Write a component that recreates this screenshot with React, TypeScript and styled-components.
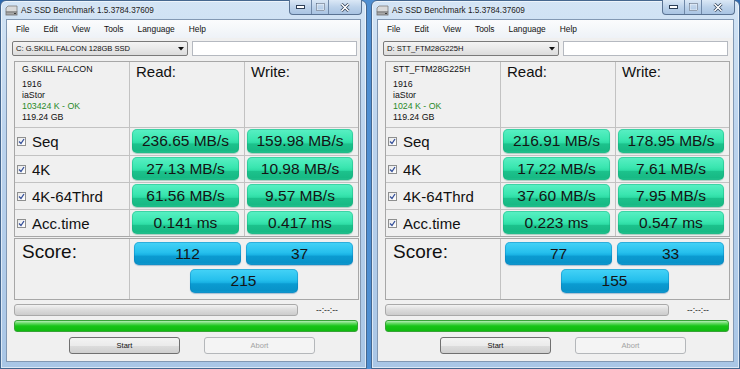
import React from 'react'
import styled, { createGlobalStyle } from 'styled-components'

const GlobalStyle = createGlobalStyle`
  html, body {
    margin: 0;
    padding: 0;
  }
  body {
    width: 740px;
    height: 369px;
    overflow: hidden;
    font-family: "Liberation Sans", Arial, sans-serif;
    color: #111;
  }
`

const Desktop = styled.div`
  display: flex;
  gap: 4px;
  width: 740px;
  height: 369px;
  background: linear-gradient(90deg, #2c68b0 0%, #4f8fd2 50%, #2c68b0 100%);
  overflow: hidden;
`

const Window = styled.div<{ $width: number }>`
  flex: 0 0 ${p => p.$width}px;
  height: 369px;
  box-sizing: border-box;
  display: flex;
  flex-direction: column;
  padding: 0 5px 6px;
  border: 1px solid #45678f;
  border-radius: 6px 6px 0 0;
  background: linear-gradient(180deg, #d3e4f5 0%, #bcd4ee 35%, #a9c6e6 100%);
  box-shadow: inset 0 0 0 1px rgba(255, 255, 255, 0.6);
`

const TitleBar = styled.div`
  height: 18px;
  margin: 0 -5px;
  padding-left: 4px;
  display: flex;
  align-items: center;
  gap: 3px;
`

const Title = styled.span`
  font-size: 8.2px;
  color: #1b1b1b;
  text-shadow: 0 0 6px rgba(255, 255, 255, 0.9);
  white-space: nowrap;
`

const Captions = styled.div`
  margin: -1px 4px 0 auto;
  align-self: flex-start;
  height: 14px;
  display: flex;
  border: 1px solid #5a7393;
  border-top: none;
  border-radius: 0 0 4px 4px;
  overflow: hidden;
  background: linear-gradient(180deg, #dbe8f6 0%, #bcd2ea 50%, #a9c4e3 100%);
`

const CaptionButton = styled.div<{ $width: number }>`
  width: ${p => p.$width}px;
  display: flex;
  align-items: center;
  justify-content: center;
  & + & {
    border-left: 1px solid #6f88a8;
  }
`

const Client = styled.div`
  flex: 1;
  display: flex;
  flex-direction: column;
  background: #f0f0f0;
  border: 1px solid #8298b3;
`

const MenuBar = styled.div`
  height: 18px;
  display: flex;
  align-items: center;
  padding-left: 2px;
  background: linear-gradient(180deg, #fbfcfd 0%, #eef2f7 100%);
`

const MenuItem = styled.span`
  padding: 0 7px;
  font-size: 8.4px;
  color: #111;
`

const Toolbar = styled.div`
  display: flex;
  gap: 4px;
  margin: 3px 0 0 5px;
  height: 15px;
`

const Combo = styled.div`
  width: 176px;
  box-sizing: border-box;
  display: flex;
  align-items: center;
  justify-content: space-between;
  padding: 0 3px 0 3px;
  border: 1px solid #7a7a7a;
  border-radius: 2px;
  background: linear-gradient(180deg, #f4f4f4 0%, #e9e9e9 50%, #dcdcdc 100%);
  font-size: 7.6px;
  white-space: nowrap;
`

const TextBox = styled.div`
  width: 165px;
  box-sizing: border-box;
  border: 1px solid #b5b9c0;
  background: #fff;
`

const Results = styled.div`
  display: grid;
  grid-template-columns: 114px 114px 113px;
  grid-template-rows: 65px 27px 26px 26px 26px;
  gap: 1px;
  width: 345px;
  box-sizing: border-box;
  margin: 5px 0 0 7px;
  border: 1px solid #a7a7a7;
  background: #c2c2c2;
`

const Cell = styled.div`
  background: #f0f0f0;
  box-sizing: border-box;
  min-width: 0;
`

const InfoCell = styled(Cell)`
  padding: 2px 0 0 7px;
  font-size: 8.8px;
  line-height: 11px;
`

const InfoLine = styled.div<{ $ok?: boolean; $first?: boolean }>`
  color: ${p => (p.$ok ? '#2a8a2a' : '#111')};
  margin-bottom: ${p => (p.$first ? 4 : 0)}px;
  white-space: nowrap;
`

const HeadCell = styled(Cell)`
  padding: 1px 0 0 6px;
  font-size: 15px;
  line-height: 17px;
`

const LabelCell = styled(Cell)`
  display: flex;
  align-items: center;
  gap: 6px;
  padding-left: 2px;
  font-size: 15px;
`

const Check = styled.span`
  width: 9px;
  height: 9px;
  box-sizing: border-box;
  border: 1px solid #8e8f8f;
  background: linear-gradient(135deg, #e9e9e9 0%, #ffffff 100%);
  display: flex;
  align-items: center;
  justify-content: center;
`

const ValueCell = styled(Cell)`
  padding: 1px 5px 2px 2px;
  display: flex;
`

const Pill = styled.div<{ $tone: 'teal' | 'blue' }>`
  flex: 1;
  display: flex;
  align-items: center;
  justify-content: center;
  border-radius: 5px;
  font-size: 15.5px;
  color: #141414;
  background: ${p =>
    p.$tone === 'teal'
      ? 'linear-gradient(180deg, #5af0c4 0%, #3ae6b0 45%, #2edca5 58%, #1cc28c 62%, #17b984 92%, #2fcf9a 100%)'
      : 'linear-gradient(180deg, #45d3f7 0%, #26c0ed 45%, #19b2e4 56%, #0b9bd1 62%, #0892c8 92%, #1ba7dc 100%)'};
  box-shadow: ${p =>
    p.$tone === 'teal'
      ? 'inset 0 0 0 1px rgba(20, 170, 120, 0.4), 0 1px 1px rgba(0, 120, 80, 0.3)'
      : 'inset 0 0 0 1px rgba(10, 120, 180, 0.4), 0 1px 1px rgba(0, 80, 140, 0.3)'};
`

const ScoreBox = styled.div`
  display: grid;
  grid-template-columns: 114px 228px;
  gap: 1px;
  width: 345px;
  height: 62px;
  box-sizing: border-box;
  margin: 1px 0 0 7px;
  border: 1px solid #a7a7a7;
  background: #c2c2c2;
`

const ScoreLabel = styled(Cell)`
  padding: 3px 0 0 7px;
  font-size: 19px;
  line-height: 19px;
`

const ScoreCell = styled(Cell)`
  display: grid;
  grid-template-columns: 107px 107px;
  grid-template-rows: 23px 24px;
  column-gap: 5px;
  row-gap: 4px;
  padding: 3px 0 0 4px;
`

const TotalPill = styled(Pill)`
  grid-column: 1 / span 2;
  justify-self: center;
  width: 108px;
`

const ProgressRow = styled.div`
  display: flex;
  align-items: center;
  gap: 18px;
  margin: 4px 0 0 7px;
`

const Bar = styled.div<{ $width: number; $green?: boolean }>`
  width: ${p => p.$width}px;
  height: 12px;
  box-sizing: border-box;
  border-radius: 3px;
  border: 1px solid ${p => (p.$green ? '#37a337' : '#a9a9a9')};
  background: ${p =>
    p.$green
      ? 'linear-gradient(180deg, #b4f0b4 0%, #5fd85f 25%, #17c417 50%, #10bb10 100%)'
      : 'linear-gradient(180deg, #f2f2f2 0%, #dddddd 45%, #cccccc 100%)'};
`

const GreenBar = styled(Bar)`
  margin: 4px 0 0 7px;
`

const Eta = styled.span`
  font-size: 8.6px;
  color: #222;
`

const ButtonRow = styled.div`
  display: flex;
  gap: 24px;
  margin: 5px 0 0 62px;
`

const Button = styled.div<{ $disabled?: boolean }>`
  width: 111px;
  height: 17px;
  box-sizing: border-box;
  display: flex;
  align-items: center;
  justify-content: center;
  border-radius: 3px;
  font-size: 7.5px;
  color: ${p => (p.$disabled ? '#a3a3a3' : '#111')};
  border: 1px solid ${p => (p.$disabled ? '#b4b7ba' : '#707070')};
  background: ${p =>
    p.$disabled
      ? '#f4f4f4'
      : 'linear-gradient(180deg, #f3f3f3 0%, #ebebeb 50%, #dddddd 52%, #cfcfcf 100%)'};
`

const DriveIcon = () => (
  <svg width="13" height="11" viewBox="0 0 13 11">
    <polygon points="3,1 12,1 12,7 1,7 1,3" fill="#d9d9d9" stroke="#7b7b7b" strokeWidth="0.8" />
    <rect x="1" y="7" width="11" height="3" fill="#a8a8a8" stroke="#6f6f6f" strokeWidth="0.8" />
    <rect x="9" y="8" width="2" height="1" fill="#3d3d3d" />
  </svg>
)

const CheckMark = () => (
  <svg width="7" height="7" viewBox="0 0 7 7">
    <path d="M1 3.5 L3 5.5 L6 1" fill="none" stroke="#35509a" strokeWidth="1.3" />
  </svg>
)

type Drive = {
  combo: string
  name: string
  align: string
  width: number
  rows: [string, string, string][]
  scores: [string, string, string]
}

const drives: Drive[] = [
  {
    combo: 'C: G.SKILL FALCON 128GB SSD',
    name: 'G.SKILL FALCON',
    align: '103424 K - OK',
    width: 367,
    rows: [
      ['Seq', '236.65 MB/s', '159.98 MB/s'],
      ['4K', '27.13 MB/s', '10.98 MB/s'],
      ['4K-64Thrd', '61.56 MB/s', '9.57 MB/s'],
      ['Acc.time', '0.141 ms', '0.417 ms'],
    ],
    scores: ['112', '37', '215'],
  },
  {
    combo: 'D: STT_FTM28G225H',
    name: 'STT_FTM28G225H',
    align: '1024 K - OK',
    width: 369,
    rows: [
      ['Seq', '216.91 MB/s', '178.95 MB/s'],
      ['4K', '17.22 MB/s', '7.61 MB/s'],
      ['4K-64Thrd', '37.60 MB/s', '7.95 MB/s'],
      ['Acc.time', '0.223 ms', '0.547 ms'],
    ],
    scores: ['77', '33', '155'],
  },
]

const menu = ['File', 'Edit', 'View', 'Tools', 'Language', 'Help']

const BenchWindow = ({ drive }: { drive: Drive }) => (
  <Window $width={drive.width}>
    <TitleBar>
      <DriveIcon />
      <Title>AS SSD Benchmark 1.5.3784.37609</Title>
      <Captions>
        <CaptionButton $width={21}>
          <svg width="9" height="4"><rect x="0.5" y="0.5" width="8" height="3" fill="#fff" stroke="#2d3f57" /></svg>
        </CaptionButton>
        <CaptionButton $width={16}>
          <svg width="9" height="8"><rect x="0.5" y="0.5" width="8" height="7" fill="none" stroke="#ffffff" strokeWidth="1.6" /><rect x="0.5" y="0.5" width="8" height="7" fill="none" stroke="#4a607c" strokeWidth="0.6" /></svg>
        </CaptionButton>
        <CaptionButton $width={32}>
          <svg width="10" height="9" viewBox="0 0 10 9">
            <path d="M1.5 1 L8.5 8 M8.5 1 L1.5 8" stroke="#2d3f57" strokeWidth="3" />
            <path d="M1.5 1 L8.5 8 M8.5 1 L1.5 8" stroke="#ffffff" strokeWidth="1.6" />
          </svg>
        </CaptionButton>
      </Captions>
    </TitleBar>
    <Client>
      <MenuBar>
        {menu.map(m => (
          <MenuItem key={m}>{m}</MenuItem>
        ))}
      </MenuBar>
      <Toolbar>
        <Combo>
          <span>{drive.combo}</span>
          <svg width="6" height="4"><polygon points="0,0 6,0 3,3.5" fill="#111" /></svg>
        </Combo>
        <TextBox />
      </Toolbar>
      <Results>
        <InfoCell>
          <InfoLine $first>{drive.name}</InfoLine>
          <InfoLine>1916</InfoLine>
          <InfoLine>iaStor</InfoLine>
          <InfoLine $ok>{drive.align}</InfoLine>
          <InfoLine>119.24 GB</InfoLine>
        </InfoCell>
        <HeadCell>Read:</HeadCell>
        <HeadCell>Write:</HeadCell>
        {drive.rows.map(([label, read, write]) => (
          <React.Fragment key={label}>
            <LabelCell>
              <Check>
                <CheckMark />
              </Check>
              {label}
            </LabelCell>
            <ValueCell>
              <Pill $tone="teal">{read}</Pill>
            </ValueCell>
            <ValueCell>
              <Pill $tone="teal">{write}</Pill>
            </ValueCell>
          </React.Fragment>
        ))}
      </Results>
      <ScoreBox>
        <ScoreLabel>Score:</ScoreLabel>
        <ScoreCell>
          <Pill $tone="blue">{drive.scores[0]}</Pill>
          <Pill $tone="blue">{drive.scores[1]}</Pill>
          <TotalPill $tone="blue">{drive.scores[2]}</TotalPill>
        </ScoreCell>
      </ScoreBox>
      <ProgressRow>
        <Bar $width={284} />
        <Eta>--:--:--</Eta>
      </ProgressRow>
      <GreenBar $width={344} $green />
      <ButtonRow>
        <Button>Start</Button>
        <Button $disabled>Abort</Button>
      </ButtonRow>
    </Client>
  </Window>
)

export default function App() {
  return (
    <>
      <GlobalStyle />
      <Desktop>
        {drives.map(d => (
          <BenchWindow key={d.combo} drive={d} />
        ))}
      </Desktop>
    </>
  )
}
